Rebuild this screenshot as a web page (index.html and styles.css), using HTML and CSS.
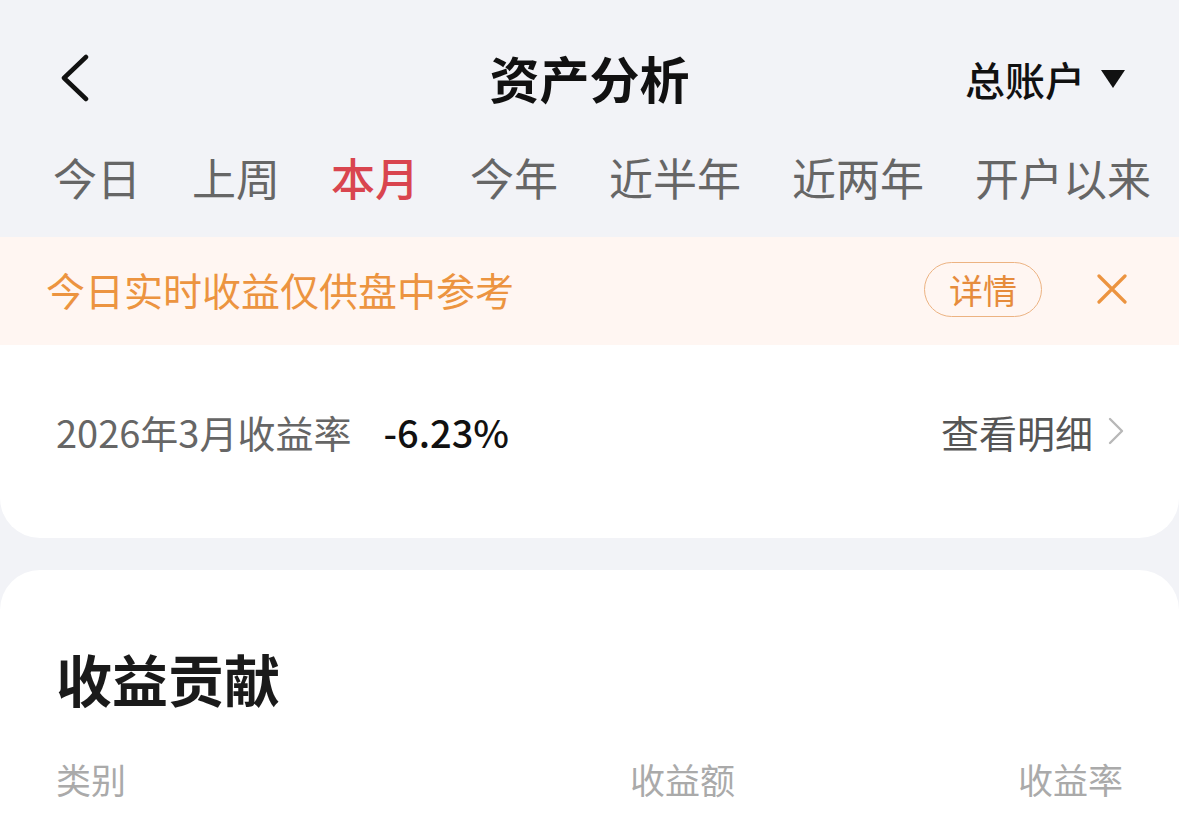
FILE: index.html
```html
<!DOCTYPE html>
<html lang="zh">
<head>
  <meta charset="UTF-8" />
  <meta name="viewport" content="width=device-width, initial-scale=1.0"/>
  <title>资产分析</title>
  <link rel="stylesheet" href="styles.css">
</head>
<body>
  <header class="topbar">
    <div class="back">
      <svg width="30" height="48" viewBox="0 0 30 48"><path d="M26 3 L4 24 L26 45" fill="none" stroke="#111" stroke-width="4.5" stroke-linecap="round" stroke-linejoin="round"/></svg>
    </div>
    <h1>资产分析</h1>
    <div class="account">总账户 <span class="tri"></span></div>
  </header>

  <nav class="tabs">
    <span>今日</span>
    <span>上周</span>
    <span class="active">本月</span>
    <span>今年</span>
    <span>近半年</span>
    <span>近两年</span>
    <span>开户以来</span>
  </nav>

  <div class="notice">
    <span class="notice-text">今日实时收益仅供盘中参考</span>
    <span class="detail-btn">详情</span>
    <svg class="close" width="30" height="30" viewBox="0 0 30 30"><path d="M2 2 L28 28 M28 2 L2 28" stroke="#ec9440" stroke-width="3.2" stroke-linecap="round"/></svg>
  </div>

  <section class="card rate-card">
    <div class="rate-row">
      <span class="rate-label">2026年3月收益率</span>
      <span class="rate-value">-6.23%</span>
      <span class="more">查看明细
        <svg width="18" height="30" viewBox="0 0 18 30"><path d="M3 3 L15 15 L3 27" fill="none" stroke="#b8b8b8" stroke-width="2.4" stroke-linecap="round" stroke-linejoin="round"/></svg>
      </span>
    </div>
  </section>

  <section class="card contrib">
    <h2>收益贡献</h2>
    <div class="cols">
      <span class="c1">类别</span>
      <span class="c2">收益额</span>
      <span class="c3">收益率</span>
    </div>
  </section>
</body>
</html>
```

FILE: styles.css
```css
body {
  margin: 0;
  background: #f2f3f7;
  font-family: "Noto Sans CJK SC", "Noto Sans", sans-serif;
  color: #222;
  overflow: hidden;
}
.topbar {
  position: relative;
  height: 120px;
  display: flex;
  align-items: center;
  justify-content: center;
  padding-top: 34px;
  box-sizing: border-box;
}
.back {
  position: absolute;
  left: 60px;
  top: 54px;
}
.topbar h1 {
  margin: 0;
  font-size: 50px;
  font-weight: 700;
  color: #111;
  line-height: 84px;
}
.account {
  position: absolute;
  right: 54px;
  top: 50px;
  font-size: 40px;
  font-weight: 500;
  color: #111;
  display: flex;
  align-items: center;
  gap: 16px;
}
.tri {
  width: 0;
  height: 0;
  border-left: 12px solid transparent;
  border-right: 12px solid transparent;
  border-top: 18px solid #111;
}
.tabs {
  display: flex;
  gap: 51px;
  padding: 0 0 4px 53px;
  height: 117px;
  box-sizing: border-box;
  align-items: center;
  font-size: 44px;
  color: #666;
  white-space: nowrap;
}
.tabs .active {
  color: #d9454f;
  font-weight: 500;
}
.notice {
  height: 108px;
  background: #fff6f2;
  display: flex;
  align-items: center;
  padding: 0 52px 4px 46px;
  box-sizing: border-box;
}
.notice-text {
  flex: 1;
  font-size: 39px;
  color: #ec9440;
}
.detail-btn {
  border: 1.5px solid #ecb382;
  border-radius: 30px;
  padding: 0 24px;
  height: 53px;
  line-height: 53px;
  font-size: 34px;
  color: #e68c3c;
  margin-right: 55px;
}
.card {
  background: #fff;
}
.rate-card {
  height: 193px;
  border-radius: 0 0 40px 40px;
}
.rate-row {
  display: flex;
  align-items: center;
  padding: 62px 54px 0 56px;
  height: 48px;
}
.rate-label {
  font-size: 38px;
  color: #666;
}
.rate-value {
  margin-left: 32px;
  font-size: 38px;
  font-weight: 500;
  color: #111;
  flex: 1;
}
.more {
  font-size: 38px;
  color: #555;
  display: flex;
  align-items: center;
  gap: 14px;
}
.contrib {
  margin-top: 32px;
  border-radius: 40px 40px 0 0;
  padding: 68px 56px 0 56px;
  height: 248px;
  box-sizing: border-box;
}
.contrib h2 {
  margin: 0;
  font-size: 56px;
  font-weight: 700;
  color: #1a1a1a;
  line-height: 80px;
}
.cols {
  display: flex;
  margin-top: 36px;
  font-size: 35px;
  line-height: 50px;
  color: #aaa;
}
.cols .c1 {
  flex: 1;
}
.cols .c2 {
  width: 106px;
  margin-right: 282px;
}
```
